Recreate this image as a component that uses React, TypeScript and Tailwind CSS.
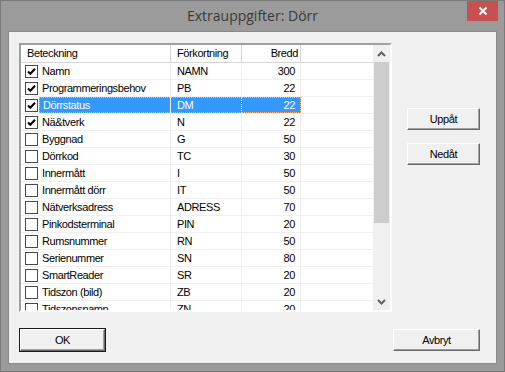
import React from "react";

type Row = { name: string; abbr: string; width: number; checked: boolean };

const rows: Row[] = [
  { name: "Namn", abbr: "NAMN", width: 300, checked: true },
  { name: "Programmeringsbehov", abbr: "PB", width: 22, checked: true },
  { name: "Dörrstatus", abbr: "DM", width: 22, checked: true },
  { name: "Nä&tverk", abbr: "N", width: 22, checked: true },
  { name: "Byggnad", abbr: "G", width: 50, checked: false },
  { name: "Dörrkod", abbr: "TC", width: 30, checked: false },
  { name: "Innermått", abbr: "I", width: 50, checked: false },
  { name: "Innermått dörr", abbr: "IT", width: 50, checked: false },
  { name: "Nätverksadress", abbr: "ADRESS", width: 70, checked: false },
  { name: "Pinkodsterminal", abbr: "PIN", width: 20, checked: false },
  { name: "Rumsnummer", abbr: "RN", width: 50, checked: false },
  { name: "Serienummer", abbr: "SN", width: 80, checked: false },
  { name: "SmartReader", abbr: "SR", width: 20, checked: false },
  { name: "Tidszon (bild)", abbr: "ZB", width: 20, checked: false },
  { name: "Tidszonsnamn", abbr: "ZN", width: 20, checked: false },
];

const SELECTED = 2;

function CheckBox({ checked }: { checked: boolean }) {
  return (
    <div className="w-[13px] h-[13px] border border-[#4a4a4a] bg-white flex items-center justify-center shrink-0">
      {checked && (
        <svg width="11" height="11" viewBox="0 0 11 11">
          <path d="M2 5.5 L4.3 7.8 L9 2.8" fill="none" stroke="#000" strokeWidth="2" />
        </svg>
      )}
    </div>
  );
}

function WinButton({ label, width, isDefault }: { label: string; width: string; isDefault?: boolean }) {
  return (
    <button
      className={`${width} h-[24px] bg-[#f0f0f0] text-[11px] text-black ${
        isDefault ? "border border-[#1a1a1a]" : "border border-transparent"
      }`}
    >
      <div className="w-full h-full border border-t-white border-l-white border-b-[#696969] border-r-[#696969] shadow-[inset_-1px_-1px_0_#a0a0a0] flex items-center justify-center">
        {label}
      </div>
    </button>
  );
}

export default function App() {
  return (
    <div
      className="w-[505px] h-[372px] bg-[#9b9b9b] border border-[#7a7a7a] flex flex-col"
      style={{ fontFamily: '"Liberation Sans", Arial, sans-serif' }}
    >
      {/* Title bar */}
      <div className="h-[30px] flex items-start shrink-0">
        <div className="w-[37px]" />
        <div
          className="flex-1 text-center text-[14px] text-[#3a3a3a] pt-[4px]"
          style={{ fontFamily: '"Open Sans", "Noto Sans", sans-serif' }}
        >
          Extrauppgifter: Dörr
        </div>
        <div className="w-[31px] h-[20px] bg-[#c75050] flex items-center justify-center">
          <svg width="10" height="10" viewBox="0 0 10 10">
            <path d="M1.5 1.5 L8.5 8.5 M8.5 1.5 L1.5 8.5" stroke="#fff" strokeWidth="2" />
          </svg>
        </div>
        <div className="w-[6px]" />
      </div>

      {/* Client area */}
      <div className="mx-[7px] h-[333px] bg-[#f0f0f0] border border-[#8a8a8a] pl-[10px] pr-[15px] pt-[11px] text-[11px] tracking-[-0.4px] text-black">
        <div className="flex">
          {/* List view */}
          <div className="w-[373px] h-[269px] border-2 border-t-[#a0a0a0] border-l-[#a0a0a0] border-b-white border-r-white bg-white flex overflow-hidden">
            <div className="w-[352px] flex flex-col">
              {/* header */}
              <div className="h-[18px] flex border-b border-[#d5d5d5] shrink-0">
                <div className="w-[150px] border-r border-[#d5d5d5] pl-[6px] flex items-center">Beteckning</div>
                <div className="w-[71px] border-r border-[#d5d5d5] pl-[6px] flex items-center">Förkortning</div>
                <div className="w-[59px] border-r border-[#d5d5d5] pr-[2px] flex items-center justify-end">Bredd</div>
                <div className="flex-1" />
              </div>
              {rows.map((r, i) => {
                const sel = i === SELECTED;
                return (
                  <div key={r.name} className="h-[17px] flex border-b border-[#f0f0f0] shrink-0">
                    <div className="w-[150px] border-r border-[#f0f0f0] pl-[4px] flex items-center">
                      <CheckBox checked={r.checked} />
                      <div
                        className={`flex-1 h-full ml-[1px] pl-[3px] pt-[1px] flex items-center ${
                          sel ? "bg-[#3399ff] text-white border-y border-l border-dotted border-[#f2b27a]" : ""
                        }`}
                      >
                        {r.name}
                      </div>
                    </div>
                    <div
                      className={`w-[71px] border-r border-[#f0f0f0] pl-[6px] pt-[1px] flex items-center ${
                        sel ? "bg-[#3399ff] text-white border-y border-dotted border-y-[#f2b27a]" : ""
                      }`}
                    >
                      {r.abbr}
                    </div>
                    <div
                      className={`w-[59px] border-r pr-[5px] pt-[1px] flex items-center justify-end ${
                        sel ? "bg-[#3399ff] text-white border-y border-dotted border-[#f2b27a]" : "border-[#f0f0f0]"
                      }`}
                    >
                      {r.width}
                    </div>
                    <div className="flex-1" />
                  </div>
                );
              })}
            </div>
            {/* scrollbar */}
            <div className="w-[17px] bg-[#f0f0f0] flex flex-col">
              <div className="h-[17px] flex items-center justify-center shrink-0">
                <svg width="9" height="6" viewBox="0 0 9 6">
                  <path d="M1 5 L4.5 1.5 L8 5" fill="none" stroke="#606060" strokeWidth="2" />
                </svg>
              </div>
              <div className="h-[161px] mx-[1px] bg-[#cdcdcd]" />
              <div className="flex-1" />
              <div className="h-[17px] flex items-center justify-center shrink-0">
                <svg width="9" height="6" viewBox="0 0 9 6">
                  <path d="M1 1 L4.5 4.5 L8 1" fill="none" stroke="#606060" strokeWidth="2" />
                </svg>
              </div>
            </div>
          </div>

          {/* side buttons */}
          <div className="ml-[14px] pt-[64px] flex flex-col gap-[11px]">
            <WinButton label="Uppåt" width="w-[75px]" />
            <WinButton label="Nedåt" width="w-[75px]" />
          </div>
        </div>

        {/* bottom buttons */}
        <div className="mt-[16px] flex justify-between">
          <WinButton label="OK" width="w-[87px]" isDefault />
          <WinButton label="Avbryt" width="w-[89px]" />
        </div>
      </div>
    </div>
  );
}
